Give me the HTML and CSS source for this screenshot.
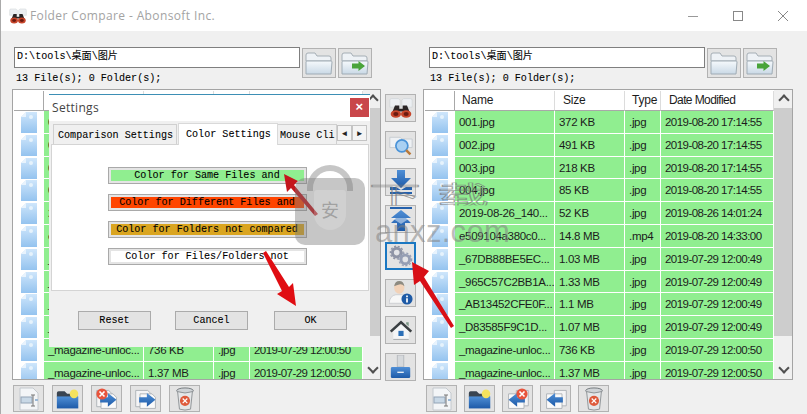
FILE: index.html
```html
<!DOCTYPE html>
<html lang="zh">
<head>
<meta charset="utf-8">
<title>Folder Compare - Abonsoft Inc.</title>
<link rel="stylesheet" href="styles.css">
</head>
<body>
<svg class="defs" width="0" height="0">
  <defs>
    <linearGradient id="fileg" x1="0" y1="0" x2="0" y2="1"><stop offset="0" stop-color="#cfe6fb"/><stop offset="1" stop-color="#94c3ef"/></linearGradient>
    <linearGradient id="foldg" x1="0" y1="0" x2="0" y2="1"><stop offset="0" stop-color="#f6f9fc"/><stop offset="1" stop-color="#c9d9e6"/></linearGradient>
    <linearGradient id="blueg" x1="0" y1="0" x2="0" y2="1"><stop offset="0" stop-color="#4f8fd6"/><stop offset="1" stop-color="#1d5aa8"/></linearGradient>
    <symbol id="file" viewBox="0 0 16 21"><path d="M5 0H16V21H0V5Z" fill="url(#fileg)"/><path d="M5 0V5H0Z" fill="#e8f3fd"/><circle cx="10" cy="5" r="2" fill="#e6f2fc"/></symbol>
    <symbol id="folder" viewBox="0 0 28 24"><path d="M1 4q0-2 2-2h7l2 3h12q2 0 2 2v3H1Z" fill="#eef2f6" stroke="#a5aeb5"/><path d="M1 23V11q0-1 1-1h24q1 0 1 1l-1 12Z" fill="url(#foldg)" stroke="#a0acb5"/></symbol>
    <symbol id="bino" viewBox="0 0 28 24"><path d="M1 3q0-2 2-2h8l2 2v8H1ZM15 3l2-2h8q2 0 2 2v8H15Z" fill="#eceff2" stroke="#c7ccd0" stroke-width=".6"/><path d="M7 9h5v4h4V9h5l4 10H17v-3h-6v3H3Z" fill="#2a2526"/><ellipse cx="8" cy="19" rx="6" ry="4.5" fill="#c7452a"/><ellipse cx="20" cy="19" rx="6" ry="4.5" fill="#c7452a"/><ellipse cx="8" cy="19" rx="3" ry="2.3" fill="#6b1a10"/><ellipse cx="20" cy="19" rx="3" ry="2.3" fill="#6b1a10"/></symbol>
    <symbol id="search" viewBox="0 0 28 26"><path d="M1 4h12l2 2h12v10H1Z" fill="#eef1f4" stroke="#c3c9ce"/><circle cx="15" cy="14" r="7" fill="#a9d0f2" stroke="#4a93d8" stroke-width="2"/><path d="M20 19l5 5" stroke="#b9793b" stroke-width="3"/></symbol>
    <symbol id="down" viewBox="0 0 24 24"><path d="M8 0h8v8h6L12 18 2 8h6Z" fill="url(#blueg)"/><path d="M1 17h6l5 3 5-3h6v3H1ZM1 22h22v2H1Z" fill="#2461ad"/></symbol>
    <symbol id="up" viewBox="0 0 24 24"><path d="M1 0h22v2H1Z" fill="#2461ad"/><path d="M12 3l10 8h-5l5 5h-6v8H8v-8H2l5-5H2Z" fill="url(#blueg)"/><path d="M3 11h18l-9 6Z" fill="#fff" opacity=".45"/></symbol>
    <symbol id="gear" viewBox="0 0 28 26"><g fill="none"><circle cx="9" cy="9" r="5" stroke="#8e94a6" stroke-width="3.4"/><circle cx="9" cy="9" r="7.4" stroke="#8e94a6" stroke-width="1.6" stroke-dasharray="2.4 2"/><circle cx="19" cy="17" r="5" stroke="#959eb4" stroke-width="3.4"/><circle cx="19" cy="17" r="7.4" stroke="#959eb4" stroke-width="1.6" stroke-dasharray="2.4 2"/></g><circle cx="9" cy="9" r="2.5" fill="#e2e4ea"/><circle cx="19" cy="17" r="2.5" fill="#e2e4ea"/></symbol>
    <symbol id="user" viewBox="0 0 28 28"><ellipse cx="12" cy="8" rx="6" ry="7" fill="#f2d2b8"/><path d="M6 6q1-6 6-6t6 6q-3-3-6-2t-6 2Z" fill="#8d8a80"/><path d="M0 26q1-9 8-10h8q7 1 8 10Z" fill="#f7f7f7" stroke="#c9ccd0"/><circle cx="21" cy="21" r="6.5" fill="#1e5aa6"/><path d="M20 20h2v5h-2zM20 17h2v2h-2z" fill="#fff"/></symbol>
    <symbol id="home" viewBox="0 0 28 24"><path d="M5 12L14 4l9 8v11H5Z" fill="#f4f5f6"/><path d="M1 13L14 1l13 12-2 2L14 5 3 15Z" fill="#3a3f42"/><path d="M20 3h3v5l-3-3Z" fill="#7f9a8a"/><rect x="11" y="13" width="6" height="6" fill="#2a6fb7"/><path d="M5 23h18" stroke="#9aa0a4"/></symbol>
    <symbol id="usb" viewBox="0 0 24 26"><rect x="8" y="0" width="7" height="13" fill="#d6d9dc" stroke="#b5b9bd"/><rect x="1" y="13" width="21" height="12" rx="1.5" fill="url(#blueg)"/><rect x="8" y="18" width="7" height="1.5" fill="#e6eef7"/></symbol>
    <symbol id="doc" viewBox="0 0 24 24"><path d="M3 1h13l5 5v17H3Z" fill="#f3f5f7" stroke="#c4c9ce"/><rect x="4" y="10" width="11" height="6" fill="#c8d8e6" stroke="#93a4b6"/><path d="M16 8v11M14 8h4M14 19h4" stroke="#777" fill="none"/><path d="M18 13h3" stroke="#9ab8d6" stroke-width="2"/></symbol>
    <symbol id="newf" viewBox="0 0 28 24"><path d="M1 5q0-2 2-2h7l3 3h12v4H1Z" fill="#3a4450"/><path d="M1 23V9h25v14Z" fill="url(#blueg)"/><circle cx="21" cy="6" r="5" fill="#f4e25e"/></symbol>
    <symbol id="copyr" viewBox="0 0 28 26"><path d="M2 3h14l4 4v15H2Z" fill="#f4f4f5" stroke="#a9aeb3"/><path d="M7 7h14l4 4v13H7Z" fill="#fafafa" stroke="#a9aeb3"/><path d="M6 11h9V6l10 8-10 8v-5H6Z" fill="url(#blueg)"/></symbol>
    <symbol id="copyl" viewBox="0 0 28 26"><path d="M12 3h14v18H12Z" fill="#f4f4f5" stroke="#a9aeb3"/><path d="M3 7h18v17H3Z" fill="#fafafa" stroke="#a9aeb3"/><path d="M22 11h-9V6L3 14l10 8v-5h9Z" fill="url(#blueg)"/></symbol>
    <symbol id="x" viewBox="0 0 12 12"><circle cx="6" cy="6" r="5.6" fill="#e8543c"/><path d="M3.5 3.5l5 5M8.5 3.5l-5 5" stroke="#fff" stroke-width="1.6"/></symbol>
    <symbol id="trash" viewBox="0 0 22 26"><ellipse cx="11" cy="4" rx="9" ry="3" fill="#cfd3d6" stroke="#6e7478"/><path d="M3 5l2 19q6 2 12 0l2-19q-8 3-16 0Z" fill="#e4e6e8" stroke="#8b9094"/><circle cx="11" cy="15" r="5.5" fill="#de5a3c"/><path d="M8.5 12.5l5 5M13.5 12.5l-5 5" stroke="#fff" stroke-width="1.3"/></symbol>
  </defs>
</svg>

<div class="app">
  <header class="titlebar">
    <svg class="title-icon"><use href="#bino"/></svg>
    <span class="title-text">Folder Compare - Abonsoft Inc.</span>
    <div class="winctl">
      <svg class="win-btn" viewBox="0 0 12 12"><path d="M1 6.5h10" stroke="#999"/></svg>
      <svg class="win-btn" viewBox="0 0 12 12"><rect x="1.5" y="1.5" width="9" height="9" fill="none" stroke="#888"/></svg>
      <svg class="win-btn" viewBox="0 0 12 12"><path d="M1 1l10 10M11 1L1 11" stroke="#888" fill="none"/></svg>
    </div>
  </header>

  <main class="workspace">
    <section class="pane pane-left">
      <div class="pathrow">
        <div class="pathbox">D:\tools\桌面\图片</div>
        <div class="tbtn"><svg class="ico-folder"><use href="#folder"/></svg></div>
        <div class="tbtn tbtn-go"><svg class="ico-folder"><use href="#folder"/></svg><span class="go-arrow"></span></div>
      </div>
      <div class="status">13 File(s); 0 Folder(s);</div>
      <div class="listbox">
        <div class="list">
          <div class="row head"><span class="c0"></span><span class="c1">Name</span><span class="c2">Size</span><span class="c3">Type</span><span class="c4">Date Modified</span></div>
          <div class="row"><span class="c0"><svg class="fi"><use href="#file"/></svg></span><span class="c1">001.jpg</span><span class="c2">372 KB</span><span class="c3">.jpg</span><span class="c4">2019-08-20 17:14:55</span></div>
          <div class="row"><span class="c0"><svg class="fi"><use href="#file"/></svg></span><span class="c1">002.jpg</span><span class="c2">491 KB</span><span class="c3">.jpg</span><span class="c4">2019-08-20 17:14:55</span></div>
          <div class="row"><span class="c0"><svg class="fi"><use href="#file"/></svg></span><span class="c1">003.jpg</span><span class="c2">218 KB</span><span class="c3">.jpg</span><span class="c4">2019-08-20 17:14:55</span></div>
          <div class="row"><span class="c0"><svg class="fi"><use href="#file"/></svg></span><span class="c1">004.jpg</span><span class="c2">85 KB</span><span class="c3">.jpg</span><span class="c4">2019-08-20 17:14:55</span></div>
          <div class="row"><span class="c0"><svg class="fi"><use href="#file"/></svg></span><span class="c1">2019-08-26_140...</span><span class="c2">52 KB</span><span class="c3">.jpg</span><span class="c4">2019-08-26 14:01:24</span></div>
          <div class="row"><span class="c0"><svg class="fi"><use href="#file"/></svg></span><span class="c1">e509104a380c0...</span><span class="c2">14.8 MB</span><span class="c3">.mp4</span><span class="c4">2019-08-20 14:33:00</span></div>
          <div class="row"><span class="c0"><svg class="fi"><use href="#file"/></svg></span><span class="c1">_67DB88BE5EC...</span><span class="c2">1.03 MB</span><span class="c3">.jpg</span><span class="c4">2019-07-29 12:00:49</span></div>
          <div class="row"><span class="c0"><svg class="fi"><use href="#file"/></svg></span><span class="c1">_965C57C2BB1A...</span><span class="c2">1.33 MB</span><span class="c3">.jpg</span><span class="c4">2019-07-29 12:00:49</span></div>
          <div class="row"><span class="c0"><svg class="fi"><use href="#file"/></svg></span><span class="c1">_AB13452CFE0F...</span><span class="c2">1.1 MB</span><span class="c3">.jpg</span><span class="c4">2019-07-29 12:00:49</span></div>
          <div class="row"><span class="c0"><svg class="fi"><use href="#file"/></svg></span><span class="c1">_D83585F9C1D...</span><span class="c2">1.07 MB</span><span class="c3">.jpg</span><span class="c4">2019-07-29 12:00:49</span></div>
          <div class="row"><span class="c0"><svg class="fi"><use href="#file"/></svg></span><span class="c1">_magazine-unloc...</span><span class="c2">736 KB</span><span class="c3">.jpg</span><span class="c4">2019-07-29 12:00:50</span></div>
          <div class="row"><span class="c0"><svg class="fi"><use href="#file"/></svg></span><span class="c1">_magazine-unloc...</span><span class="c2">1.37 MB</span><span class="c3">.jpg</span><span class="c4">2019-07-29 12:00:50</span></div>
        </div>
        <div class="scrollbar"><span class="sb-up"></span><span class="sb-thumb"></span><span class="sb-down"></span></div>
      </div>
      <div class="bottombar">
        <div class="tbtn"><svg class="ico"><use href="#doc"/></svg></div>
        <div class="tbtn"><svg class="ico"><use href="#newf"/></svg></div>
        <div class="tbtn tbtn-x"><svg class="ico"><use href="#copyr"/></svg><svg class="badge-x badge-l"><use href="#x"/></svg></div>
        <div class="tbtn"><svg class="ico"><use href="#copyr"/></svg></div>
        <div class="tbtn"><svg class="ico"><use href="#trash"/></svg></div>
      </div>
    </section>

    <nav class="centerbar">
      <div class="tbtn cbtn"><svg class="ico"><use href="#bino"/></svg></div>
      <div class="tbtn cbtn"><svg class="ico"><use href="#search"/></svg></div>
      <div class="tbtn cbtn"><svg class="ico"><use href="#down"/></svg></div>
      <div class="tbtn cbtn"><svg class="ico"><use href="#up"/></svg></div>
      <div class="tbtn cbtn cbtn-active"><svg class="ico"><use href="#gear"/></svg></div>
      <div class="tbtn cbtn"><svg class="ico"><use href="#user"/></svg></div>
      <div class="tbtn cbtn"><svg class="ico"><use href="#home"/></svg></div>
      <div class="tbtn cbtn"><svg class="ico"><use href="#usb"/></svg></div>
    </nav>

    <section class="pane pane-right">
      <div class="pathrow">
        <div class="pathbox">D:\tools\桌面\图片</div>
        <div class="tbtn"><svg class="ico-folder"><use href="#folder"/></svg></div>
        <div class="tbtn tbtn-go"><svg class="ico-folder"><use href="#folder"/></svg><span class="go-arrow"></span></div>
      </div>
      <div class="status">13 File(s); 0 Folder(s);</div>
      <div class="listbox">
        <div class="list">
          <div class="row head"><span class="c0"></span><span class="c1">Name</span><span class="c2">Size</span><span class="c3">Type</span><span class="c4">Date Modified</span></div>
          <div class="row"><span class="c0"><svg class="fi"><use href="#file"/></svg></span><span class="c1">001.jpg</span><span class="c2">372 KB</span><span class="c3">.jpg</span><span class="c4">2019-08-20 17:14:55</span></div>
          <div class="row"><span class="c0"><svg class="fi"><use href="#file"/></svg></span><span class="c1">002.jpg</span><span class="c2">491 KB</span><span class="c3">.jpg</span><span class="c4">2019-08-20 17:14:55</span></div>
          <div class="row"><span class="c0"><svg class="fi"><use href="#file"/></svg></span><span class="c1">003.jpg</span><span class="c2">218 KB</span><span class="c3">.jpg</span><span class="c4">2019-08-20 17:14:55</span></div>
          <div class="row"><span class="c0"><svg class="fi"><use href="#file"/></svg></span><span class="c1">004.jpg</span><span class="c2">85 KB</span><span class="c3">.jpg</span><span class="c4">2019-08-20 17:14:55</span></div>
          <div class="row"><span class="c0"><svg class="fi"><use href="#file"/></svg></span><span class="c1">2019-08-26_140...</span><span class="c2">52 KB</span><span class="c3">.jpg</span><span class="c4">2019-08-26 14:01:24</span></div>
          <div class="row"><span class="c0"><svg class="fi"><use href="#file"/></svg></span><span class="c1">e509104a380c0...</span><span class="c2">14.8 MB</span><span class="c3">.mp4</span><span class="c4">2019-08-20 14:33:00</span></div>
          <div class="row"><span class="c0"><svg class="fi"><use href="#file"/></svg></span><span class="c1">_67DB88BE5EC...</span><span class="c2">1.03 MB</span><span class="c3">.jpg</span><span class="c4">2019-07-29 12:00:49</span></div>
          <div class="row"><span class="c0"><svg class="fi"><use href="#file"/></svg></span><span class="c1">_965C57C2BB1A...</span><span class="c2">1.33 MB</span><span class="c3">.jpg</span><span class="c4">2019-07-29 12:00:49</span></div>
          <div class="row"><span class="c0"><svg class="fi"><use href="#file"/></svg></span><span class="c1">_AB13452CFE0F...</span><span class="c2">1.1 MB</span><span class="c3">.jpg</span><span class="c4">2019-07-29 12:00:49</span></div>
          <div class="row"><span class="c0"><svg class="fi"><use href="#file"/></svg></span><span class="c1">_D83585F9C1D...</span><span class="c2">1.07 MB</span><span class="c3">.jpg</span><span class="c4">2019-07-29 12:00:49</span></div>
          <div class="row"><span class="c0"><svg class="fi"><use href="#file"/></svg></span><span class="c1">_magazine-unloc...</span><span class="c2">736 KB</span><span class="c3">.jpg</span><span class="c4">2019-07-29 12:00:50</span></div>
          <div class="row"><span class="c0"><svg class="fi"><use href="#file"/></svg></span><span class="c1">_magazine-unloc...</span><span class="c2">1.37 MB</span><span class="c3">.jpg</span><span class="c4">2019-07-29 12:00:50</span></div>
        </div>
        <div class="scrollbar"><span class="sb-up"></span><span class="sb-thumb"></span><span class="sb-down"></span></div>
      </div>
      <div class="bottombar bottombar-r">
        <div class="tbtn"><svg class="ico"><use href="#doc"/></svg></div>
        <div class="tbtn"><svg class="ico"><use href="#newf"/></svg></div>
        <div class="tbtn tbtn-x"><svg class="ico"><use href="#copyl"/></svg><svg class="badge-x badge-r"><use href="#x"/></svg></div>
        <div class="tbtn"><svg class="ico"><use href="#copyl"/></svg></div>
        <div class="tbtn"><svg class="ico"><use href="#trash"/></svg></div>
      </div>
    </section>
  </main>

  <div class="dialog">
    <div class="dlg-title"><span>Settings</span><span class="dlg-close">×</span></div>
    <div class="tabstrip">
      <span class="tab tab-a">Comparison Settings</span>
      <span class="tab tab-on">Color Settings</span>
      <span class="tab tab-m">Mouse Cli</span>
      <span class="tabnav">◂</span>
      <span class="tabnav">▸</span>
    </div>
    <div class="tabpanel">
      <div class="colorbtn"><span class="cb-same">Color for Same Files and</span></div>
      <div class="colorbtn"><span class="cb-diff">Color for Different Files and</span></div>
      <div class="colorbtn"><span class="cb-fold">Color for Folders not compared</span></div>
      <div class="colorbtn"><span class="cb-none">Color for Files/Folders not</span></div>
    </div>
    <div class="dlg-actions">
      <div class="dbtn">Reset</div>
      <div class="dbtn">Cancel</div>
      <div class="dbtn">OK</div>
    </div>
  </div>

  <svg class="arrows" viewBox="0 0 807 414">
    <path d="M284 174L298 181 294 185 318 214 315 216 291 188 287 192Z" fill="#c4161c"/>
    <path d="M263 253L266 251 289 287 293 283 296 306 277 294 282 291Z" fill="#e00d12"/>
    <path d="M412 262L429 271 424 277 454 326 451 328 420 281 414 285Z" fill="#d80f16"/>
  </svg>

  <div class="wm-bag">
    <span class="wm-handle"></span>
    <span class="wm-body"><span class="wm-shield">安</span></span>
  </div>
  <div class="wm-cn">下载</div>
  <div class="wm-en">anxz.com</div>
</div>
</body>
</html>
```
FILE: styles.css
```css
* { box-sizing: border-box; }
html, body { margin: 0; padding: 0; }
body { width: 807px; height: 414px; overflow: hidden; background: #f0f0f0; font-family: "Liberation Sans", "Noto Sans CJK SC", sans-serif; }
.defs { position: absolute; }
.app { position: relative; width: 807px; height: 414px; overflow: hidden; display: flex; flex-direction: column; border-left: 1px solid #aaa; }

.titlebar { height: 31px; background: #fff; display: flex; align-items: center; padding-left: 8px; flex: none; }
.title-icon { width: 18px; height: 16px; margin-right: 3px; }
.title-text { font: 12px "Open Sans", "Liberation Sans", sans-serif; color: #a3a3a3; letter-spacing: .38px; }
.winctl { margin-left: auto; display: flex; gap: 33px; padding-right: 18px; }
.win-btn { width: 12px; height: 12px; }

.workspace { display: flex; flex: 1; min-height: 0; padding: 16px 0 0 11px; }
.pane { display: flex; flex-direction: column; width: 369px; }
.pane-right { width: 370px; }

.pathrow { display: flex; padding-left: 2px; height: 31px; align-items: flex-start; gap: 2px; }
.pathbox { width: 286px; height: 21px; background: #fff; border: 1px solid #7f7f7f; font: 10.1px/18px "Liberation Mono", "Noto Sans CJK SC", monospace; padding-left: 2px; color: #000; -webkit-text-stroke: .08px #000; }
.pane-right .pathbox { width: 276px; margin-left: 6px; }
.pane-right .pathrow { padding-left: 0; }
.pathrow .tbtn { margin-top: 1px; width: 34px; height: 30px; }
.status { font: 10.1px/12px "Liberation Mono", monospace; padding-left: 4px; color: #000; height: 11px; margin-top: -5px; flex: none; -webkit-text-stroke: .08px #000; }
.pane-right .status { padding-left: 7px; }

.tbtn { position: relative; width: 31px; height: 28px; background: #e3e3e3; border: 1px solid #b2b2b2; display: flex; align-items: center; justify-content: center; flex: none; }
.ico-folder { width: 28px; height: 24px; }
.ico { width: 24px; height: 24px; }
.go-arrow { position: absolute; right: 6px; bottom: 6px; width: 13px; height: 10px; background: #49a43a; clip-path: polygon(0 25%, 50% 25%, 50% 0, 100% 50%, 50% 100%, 50% 75%, 0 75%); }

.listbox { position: relative; height: 291px; margin-top: 5px; border: 1px solid #a4a4a4; background: #fff; display: flex; overflow: hidden; flex: none; }
.list { width: 350px; flex: none; overflow: hidden; padding-top: 1px; border-left: 1px solid #fff; }
.row { display: grid; grid-template-columns: 30px 100px 70px 36px 113px; height: 22.8px; font: 11.5px/23px "Liberation Sans", sans-serif; letter-spacing: -.32px; color: #1c1c1c; }
.row span { background: #90ee90; border-right: 1px solid #fff; border-bottom: 1px solid #fff; padding-left: 4px; white-space: nowrap; overflow: hidden; }
.row .c0 { background: #fff; border: 0; padding: 1px 0 0 7px; }
.row .c4 { letter-spacing: -.54px; }
.fi { width: 16px; height: 21px; display: block; }
.head { height: 20px; font-size: 12px; line-height: 19px; letter-spacing: -.2px; }
.head span { background: #fff; border-right: 1px solid #dcdcdc; border-bottom: 1px solid #a8a8a8; padding-left: 8px; }
.head .c0 { border: 1px solid #a8a8a8; border-width: 0 1px 1px 0; }
.head .c1 { padding-left: 7px; }
.head .c3 { padding-left: 7px; }
.head .c4 { padding-left: 8px; letter-spacing: -.6px; }

.scrollbar { flex: 1; background: #f0f0f0; position: relative; display: flex; flex-direction: column; }
.sb-up, .sb-down { height: 17px; flex: none; position: relative; }
.sb-up::after, .sb-down::after { content: ""; position: absolute; left: 6px; top: 6px; width: 6px; height: 6px; border-left: 2px solid #505050; border-top: 2px solid #505050; transform: rotate(45deg); }
.sb-down::after { transform: rotate(225deg); top: 4px; }
.sb-thumb { height: 228px; background: #cdcdcd; margin-top: 1px; }
.sb-down { margin-top: auto; margin-bottom: 2px; }

.bottombar { display: flex; gap: 8px; padding: 5px 0 0 1px; }
.bottombar-r { padding-left: 3px; gap: 7px; }
.bottombar .tbtn { height: 27px; width: 31px; }
.badge-x { position: absolute; width: 12px; height: 12px; top: 2px; }
.badge-l { left: 4px; }
.badge-r { right: 4px; }

.centerbar { width: 43px; padding: 47px 0 0 5px; display: flex; flex-direction: column; gap: 9px; flex: none; margin-left: -1px; }
.cbtn { height: 28px; }
.cbtn-active { border: 2px solid #1b78c2; }

.dialog { position: absolute; left: 48px; top: 94px; width: 321px; height: 253px; background: #f0f0f0; border-top: 1px solid #3d8fb5; display: flex; flex-direction: column; z-index: 2; }
.dlg-title { height: 26px; background: #fff; display: flex; align-items: center; justify-content: space-between; font: 12px "Open Sans", "Liberation Sans", sans-serif; color: #444; padding: 0 1px 2px 3px; letter-spacing: .3px; flex: none; }
.dlg-close { width: 19px; height: 19px; background: #c9464a; color: #fff; text-align: center; font: bold 13px/18px "Liberation Sans", sans-serif; margin-top: 1px; }
.tabstrip { height: 23px; display: flex; align-items: flex-end; padding-left: 4px; font: 10.1px "Liberation Mono", monospace; color: #000; flex: none; -webkit-text-stroke: .08px #000; }
.tab { height: 20px; line-height: 22px; white-space: nowrap; background: #f0f0f0; border: 1px solid #d0d0d0; border-bottom: 0; }
.tab-a { width: 124px; padding-left: 4px; margin-right: 1px; }
.tab-on { width: 100px; height: 22px; line-height: 21px; background: #fff; padding-left: 7px; border-color: #d9d9d9; margin-bottom: -1px; position: relative; }
.tab-m { width: 59px; padding-left: 2px; border-left: 0; }
.tabnav { width: 15px; height: 16px; margin: 0 0 3px 0; border: 1px solid #c4c4c4; background: #f4f4f4; text-align: center; line-height: 14px; font-size: 9px; font-family: "DejaVu Sans", sans-serif; color: #222; }
.tabpanel { margin: 0 1px 0 2px; height: 147px; background: #fff; border: 1px solid #d4d4d4; display: flex; flex-direction: column; align-items: center; padding: 22px 6px 0 0; gap: 10px; flex: none; }
.colorbtn { width: 199px; height: 17px; background: #e4e4e4; border: 1px solid #a9a9a9; padding: 2px; flex: none; }
.colorbtn span { display: block; height: 11px; font: 10.1px/11px "Liberation Mono", monospace; color: #000; text-align: center; white-space: nowrap; -webkit-text-stroke: .08px #000; }
.cb-same { background: #90ee90; }
.cb-diff { background: #ff4500; }
.cb-fold { background: #daa520; }
.cb-none { background: #fff; }
.dlg-actions { display: flex; padding: 20px 0 0 29px; gap: 24px; }
.dbtn { width: 73px; height: 19px; background: #e3e3e3; border: 1px solid #ababab; font: 10.1px/17px "Liberation Mono", monospace; color: #000; text-align: center; -webkit-text-stroke: .08px #000; }
.dbtn:last-child { margin-left: 2px; }

.arrows { position: absolute; left: -1px; top: 0; width: 807px; height: 414px; z-index: 3; pointer-events: none; }
.wm-bag { position: absolute; left: 294px; top: 165px; width: 70px; height: 80px; z-index: 4; }
.wm-handle { position: absolute; left: 12px; top: 0; width: 46px; height: 26px; border: 6px solid rgba(120,120,120,.42); border-bottom: 0; border-radius: 23px 23px 0 0; }
.wm-body { position: absolute; left: 0; top: 13px; width: 70px; height: 67px; background: rgba(120,120,120,.42); border-radius: 10px; display: flex; justify-content: center; padding-top: 12px; }
.wm-shield { width: 32px; height: 40px; background: rgba(255,255,255,.18); border-radius: 3px 3px 16px 16px; color: rgba(120,120,120,.55); font: 18px/38px "Noto Sans CJK SC", sans-serif; text-align: center; }
.wm-cn { position: absolute; left: 368px; top: 171px; width: 145px; overflow: hidden; font: 52px/46px "Noto Sans CJK SC", sans-serif; letter-spacing: 16px; color: transparent; -webkit-text-stroke: 1.5px rgba(120,120,120,.7); z-index: 4; white-space: nowrap; transform: scaleY(.5); }
.wm-en { position: absolute; left: 374px; top: 217px; font: 31px/30px "Liberation Sans", sans-serif; color: rgba(130,130,130,.55); z-index: 4; white-space: nowrap; letter-spacing: .3px; }
```
